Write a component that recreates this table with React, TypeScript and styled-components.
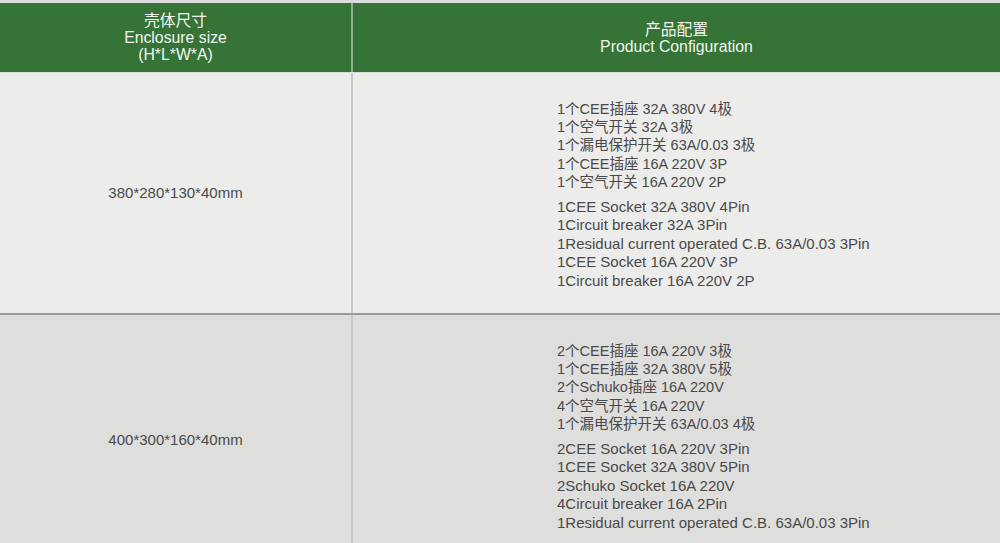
import React from "react";
import styled, { createGlobalStyle } from "styled-components";

const GlobalStyle = createGlobalStyle`
  html, body {
    margin: 0;
    padding: 0;
    background: #ececea;
  }
  body {
    font-family: "Liberation Sans", "Noto Sans CJK SC", Arial, sans-serif;
  }
`;

const Table = styled.div`
  width: 1000px;
  border-top: 3px solid #dcdcdc;
  overflow: hidden;
  height: 540px;
`;

const Row = styled.div<{ $variant: "head" | "light" | "dark" }>`
  display: grid;
  grid-template-columns: 353px 1fr;
  background: ${({ $variant }) =>
    $variant === "head" ? "#357336" : $variant === "light" ? "#ececea" : "#dededc"};
  border-bottom: ${({ $variant }) =>
    $variant === "head" ? "1px solid #d8e0d8" : "2px solid #9a9a9a"};
  height: ${({ $variant }) =>
    $variant === "head" ? "69px" : $variant === "light" ? "240px" : "250px"};
  box-sizing: content-box;
`;

const Cell = styled.div<{ $head?: boolean; $first?: boolean }>`
  display: flex;
  flex-direction: column;
  justify-content: ${({ $first, $head }) => ($first || $head ? "center" : "flex-start")};
  align-items: ${({ $first, $head }) => ($first || $head ? "center" : "flex-start")};
  text-align: center;
  color: ${({ $head }) => ($head ? "#f2f6f2" : "#4a4a4a")};
  font-size: ${({ $head }) => ($head ? "15.8px" : "15px")};
  line-height: ${({ $head }) => ($head ? "17px" : "18.4px")};
  border-right: ${({ $first, $head }) =>
    $first ? `2px solid ${$head ? "#8fb08f" : "#c9c9c9"}` : "none"};
  padding-left: ${({ $first, $head }) => ($first || $head ? "0" : "204px")};
  padding-top: ${({ $first, $head }) => ($first || $head ? "0" : "26.5px")};
`;

const Block = styled.div<{ $lang: "zh" | "en" }>`
  display: flex;
  flex-direction: column;
  text-align: left;
  font-size: ${({ $lang }) => ($lang === "zh" ? "14.5px" : "15px")};
  & + & {
    margin-top: 6.5px;
  }
`;

const Line = styled.span`
  white-space: nowrap;
`;

type Entry = { size: string; zh: string[]; en: string[] };

const rows: Entry[] = [
  {
    size: "380*280*130*40mm",
    zh: [
      "1个CEE插座 32A 380V 4极",
      "1个空气开关 32A 3极",
      "1个漏电保护开关 63A/0.03 3极",
      "1个CEE插座 16A 220V 3P",
      "1个空气开关 16A 220V 2P",
    ],
    en: [
      "1CEE Socket 32A 380V 4Pin",
      "1Circuit breaker 32A 3Pin",
      "1Residual current operated C.B. 63A/0.03 3Pin",
      "1CEE Socket 16A 220V 3P",
      "1Circuit breaker 16A 220V 2P",
    ],
  },
  {
    size: "400*300*160*40mm",
    zh: [
      "2个CEE插座 16A 220V 3极",
      "1个CEE插座 32A 380V 5极",
      "2个Schuko插座 16A 220V",
      "4个空气开关 16A 220V",
      "1个漏电保护开关 63A/0.03 4极",
    ],
    en: [
      "2CEE Socket 16A 220V 3Pin",
      "1CEE Socket 32A 380V 5Pin",
      "2Schuko Socket 16A 220V",
      "4Circuit breaker 16A 2Pin",
      "1Residual current operated C.B. 63A/0.03 3Pin",
    ],
  },
];

export default function App() {
  return (
    <>
      <GlobalStyle />
      <Table>
        <Row $variant="head">
          <Cell $head $first>
            <Line>壳体尺寸</Line>
            <Line>Enclosure size</Line>
            <Line>(H*L*W*A)</Line>
          </Cell>
          <Cell $head>
            <Line>产品配置</Line>
            <Line>Product Configuration</Line>
          </Cell>
        </Row>
        {rows.map((r, i) => (
          <Row key={r.size} $variant={i % 2 === 0 ? "light" : "dark"}>
            <Cell $first>
              <Line>{r.size}</Line>
            </Cell>
            <Cell>
              <Block $lang="zh">
                {r.zh.map((t) => (
                  <Line key={t}>{t}</Line>
                ))}
              </Block>
              <Block $lang="en">
                {r.en.map((t) => (
                  <Line key={t}>{t}</Line>
                ))}
              </Block>
            </Cell>
          </Row>
        ))}
      </Table>
    </>
  );
}
